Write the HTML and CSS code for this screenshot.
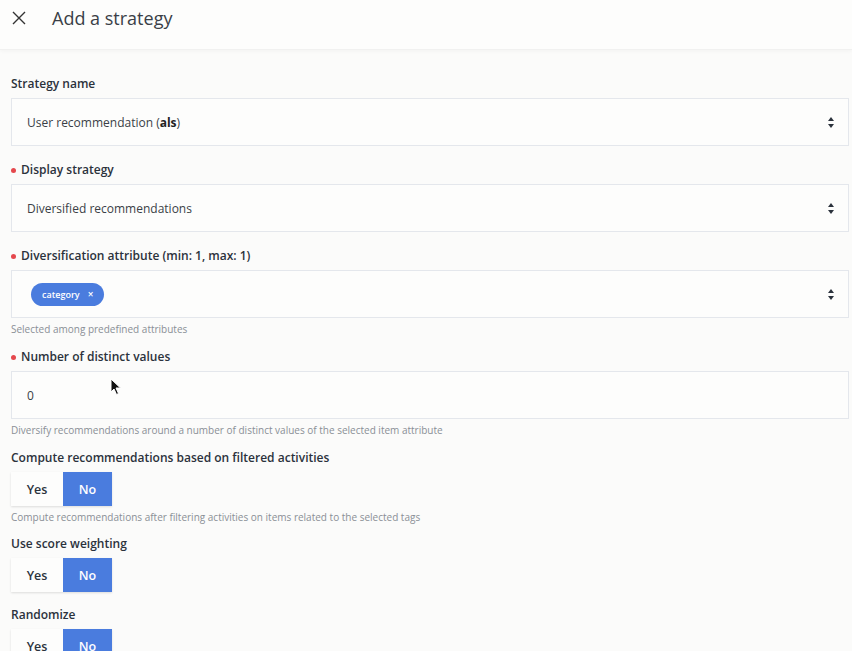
FILE: index.html
```html
<!DOCTYPE html>
<html lang="en">
<head>
  <meta charset="UTF-8">
  <title>Add a strategy</title>
  <link rel="stylesheet" href="styles.css">
</head>
<body>
  <header class="topbar">
    <button class="close-btn" aria-label="Close">
      <svg width="14" height="14" viewBox="0 0 14 14"><path d="M1 1L13 13M13 1L1 13" stroke="#333" stroke-width="1.4" fill="none"/></svg>
    </button>
    <h1>Add a strategy</h1>
  </header>

  <main class="form">
    <div class="field">
      <label>Strategy name</label>
      <div class="select">
        <span>User recommendation (<b>als</b>)</span>
        <span class="arrows"></span>
      </div>
    </div>

    <div class="field">
      <label class="required">Display strategy</label>
      <div class="select">
        <span>Diversified recommendations</span>
        <span class="arrows"></span>
      </div>
    </div>

    <div class="field">
      <label class="required">Diversification attribute (min: 1, max: 1)</label>
      <div class="select chips">
        <span class="chip">category <span class="chip-x">&times;</span></span>
        <span class="arrows"></span>
      </div>
      <p class="help">Selected among predefined attributes</p>
    </div>

    <div class="field">
      <label class="required">Number of distinct values</label>
      <div class="input">0</div>
      <p class="help">Diversify recommendations around a number of distinct values of the selected item attribute</p>
    </div>

    <div class="field field-toggle">
      <label>Compute recommendations based on filtered activities</label>
      <div class="toggle">
        <span class="opt">Yes</span>
        <span class="opt active">No</span>
      </div>
      <p class="help">Compute recommendations after filtering activities on items related to the selected tags</p>
    </div>

    <div class="field field-toggle">
      <label>Use score weighting</label>
      <div class="toggle">
        <span class="opt">Yes</span>
        <span class="opt active">No</span>
      </div>
    </div>

    <div class="field field-toggle">
      <label>Randomize</label>
      <div class="toggle">
        <span class="opt">Yes</span>
        <span class="opt active">No</span>
      </div>
    </div>
  </main>

  <svg class="cursor" width="12" height="18" viewBox="0 0 12 18">
    <path d="M1 1L1 14L4 11L6.5 16.5L8.5 15.5L6 10L10.5 10Z" fill="#111" stroke="#fff" stroke-width="1"/>
  </svg>
</body>
</html>
```

FILE: styles.css
```css
body {
  margin: 0;
  font-family: "Open Sans", Arial, sans-serif;
  background: #fbfbfa;
  color: #333;
  overflow: hidden;
  position: relative;
  height: 651px;
}
.topbar {
  height: 50px;
  background: #fdfdfc;
  display: flex;
  align-items: center;
  box-shadow: 0 1px 4px rgba(0, 0, 0, 0.04);
  border-bottom: 1px solid #f1f1f0;
  box-sizing: border-box;
  padding-bottom: 14px;
}
.close-btn {
  border: none;
  background: none;
  padding: 0;
  margin-left: 12px;
  width: 14px;
  height: 14px;
  display: flex;
}
.topbar h1 {
  margin: 0 0 0 26px;
  font-size: 18px;
  font-weight: 400;
  color: #3a3f47;
}
.form {
  padding: 25px 3px 0 11px;
}
.field {
  margin-bottom: 15px;
}
.field-toggle {
  margin-bottom: 14px;
}
.field label {
  display: block;
  font-size: 12px;
  font-weight: 600;
  line-height: 18px;
  color: #2b323c;
  margin-bottom: 5px;
}
.field label.required {
  position: relative;
  padding-left: 10px;
}
.field label.required::before {
  content: "";
  position: absolute;
  left: 0;
  top: 7px;
  width: 5px;
  height: 5px;
  border-radius: 50%;
  background: #e5484d;
}
.select, .input {
  height: 48px;
  box-sizing: border-box;
  border: 1px solid #e4e7ec;
  background: #fdfdfc;
  display: flex;
  align-items: center;
  padding: 0 15px;
  font-size: 12px;
  color: #3a3f47;
}
.select {
  justify-content: space-between;
  padding-right: 14px;
}
.select b {
  font-weight: 700;
  color: #222;
}
.chips {
  padding-left: 19px;
}
.chip {
  background: #4a7cde;
  color: #fff;
  border-radius: 12px;
  height: 23px;
  padding: 0 11px;
  display: inline-flex;
  align-items: center;
  font-size: 9px;
  font-weight: 600;
}
.chip-x {
  margin-left: 8px;
  font-size: 10px;
}
.arrows {
  width: 6px;
  height: 11px;
  position: relative;
}
.arrows::before, .arrows::after {
  content: "";
  position: absolute;
  left: 0;
  border-left: 3px solid transparent;
  border-right: 3px solid transparent;
}
.arrows::before {
  top: 0;
  border-bottom: 4px solid #2b323c;
}
.arrows::after {
  bottom: 0;
  border-top: 4px solid #2b323c;
}
.help {
  margin: 4px 0 -3px;
  font-size: 10px;
  line-height: 14px;
  color: #8a8f96;
}
.toggle + .help {
  margin-bottom: -3px;
}
.toggle {
  display: inline-flex;
  height: 34px;
  box-shadow: 0 1px 2px rgba(0, 0, 0, 0.12);
}
.toggle .opt {
  display: flex;
  align-items: center;
  justify-content: center;
  font-size: 12.5px;
  font-weight: 600;
  color: #2b323c;
  background: #fdfdfc;
  width: 52px;
}
.toggle .opt.active {
  background: #4a7cde;
  color: #fff;
  width: 49px;
}
.cursor {
  position: absolute;
  left: 110px;
  top: 378px;
}
```
